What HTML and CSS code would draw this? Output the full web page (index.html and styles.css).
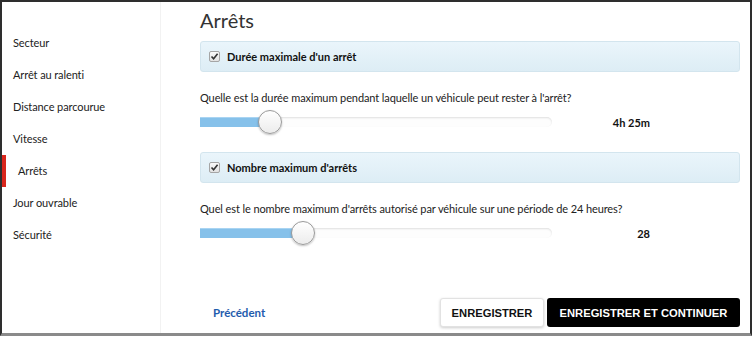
FILE: index.html
```html
<!DOCTYPE html>
<html>
<head>
    <meta charset="utf-8">
    <title>Arrêts</title>
    <link rel="stylesheet" href="styles.css">
</head>
<body>
    <div class="frame">
        <ul class="menu">
            <li>Secteur</li>
            <li>Arrêt au ralenti</li>
            <li>Distance parcourue</li>
            <li>Vitesse</li>
            <li class="active">Arrêts</li>
            <li>Jour ouvrable</li>
            <li>Sécurité</li>
        </ul>

        <div class="main">
            <h1>Arrêts</h1>

            <div class="panel">
                <span class="check"><svg width="9" height="9" viewBox="0 0 9 9"><path d="M1.5 4.5 L3.6 6.8 L7.6 1.8" fill="none" stroke="#333" stroke-width="1.6"/></svg></span>
                Durée maximale d'un arrêt
            </div>
            <p class="question">Quelle est la durée maximum pendant laquelle un véhicule peut rester à l'arrêt?</p>
            <div class="slider-row">
                <div class="track">
                    <div class="fill" style="width: 70px"></div>
                    <div class="handle" style="left: 58px"></div>
                </div>
                <span class="value">4h 25m</span>
            </div>

            <div class="panel">
                <span class="check"><svg width="9" height="9" viewBox="0 0 9 9"><path d="M1.5 4.5 L3.6 6.8 L7.6 1.8" fill="none" stroke="#333" stroke-width="1.6"/></svg></span>
                Nombre maximum d'arrêts
            </div>
            <p class="question">Quel est le nombre maximum d'arrêts autorisé par véhicule sur une période de 24 heures?</p>
            <div class="slider-row">
                <div class="track">
                    <div class="fill" style="width: 103px"></div>
                    <div class="handle" style="left: 91px"></div>
                </div>
                <span class="value">28</span>
            </div>

            <div class="footer">
                <a class="prev" href="#">Précédent</a>
                <div class="buttons">
                    <button class="btn-save">ENREGISTRER</button>
                    <button class="btn-next">ENREGISTRER ET CONTINUER</button>
                </div>
            </div>
        </div>
    </div>
</body>
</html>
```

FILE: styles.css
```css
* {
    margin: 0;
    padding: 0;
    box-sizing: border-box;
}

body {
    background: white;
    font-family: Lato, "Open Sans", sans-serif;
    font-size: 11px;
    letter-spacing: -0.1px;
    color: #222;
}

.frame {
    display: flex;
    width: 752px;
    height: 336px;
    border-top: 2px solid #2e2e2e;
    border-left: 2px solid #2e2e2e;
    border-right: 2px solid #2e2e2e;
    border-bottom: 3px solid #8a8a8a;
}

/* sidebar */
.menu {
    list-style: none;
    width: 159px;
    padding-top: 25px;
    border-right: 1px solid #f2f2f2;
}

.menu li {
    height: 32px;
    line-height: 32px;
    padding-left: 7px;
    border-left: 4px solid transparent;
}

.menu li.active {
    border-left-color: #d9261c;
    padding-left: 12px;
}

/* content */
.main {
    flex: 1;
    display: flex;
    flex-direction: column;
    padding: 6px 10px 6px 39px;
}

h1 {
    font-size: 20px;
    font-weight: normal;
    line-height: 24px;
    letter-spacing: 0;
    color: #333;
    margin-bottom: 9px;
}

.panel {
    display: flex;
    align-items: center;
    height: 31px;
    padding-left: 8px;
    border: 1px solid #d3e5ee;
    border-radius: 3px;
    background: linear-gradient(#eaf5fb, #ddedf5);
    font-weight: bold;
    font-size: 11px;
    letter-spacing: 0;
    color: #111;
    margin-bottom: 18px;
}

.check {
    display: flex;
    align-items: center;
    justify-content: center;
    width: 11px;
    height: 11px;
    margin-right: 7px;
    border: 1px solid #a5a5a5;
    border-radius: 2px;
    background: linear-gradient(#fafafa, #e2e2e2);
}

.question {
    line-height: 16px;
    margin-bottom: 4px;
}

.slider-row {
    display: flex;
    align-items: center;
    height: 24px;
    margin-bottom: 18px;
}

.track {
    position: relative;
    width: 352px;
    height: 10px;
    border-radius: 0 5px 5px 0;
    background: #fdfdfd;
    box-shadow: inset 0 1px 2px rgba(0, 0, 0, 0.12);
}

.fill {
    height: 100%;
    background: #86c1ea;
    border-top: 1px solid #a9d4f2;
}

.handle {
    position: absolute;
    top: -7px;
    width: 24px;
    height: 24px;
    border-radius: 50%;
    border: 1px solid #9a9a9a;
    background: linear-gradient(#ffffff, #ececec);
    box-shadow: 0 1px 2px rgba(0, 0, 0, 0.25);
}

.value {
    width: 98px;
    text-align: right;
    font-weight: bold;
    font-size: 11px;
    letter-spacing: 0;
    color: #111;
}

.footer {
    margin-top: auto;
    display: flex;
    align-items: center;
    justify-content: space-between;
    padding-left: 13px;
}

.prev {
    color: #1f5cad;
    font-weight: bold;
    font-size: 11.5px;
    letter-spacing: 0;
    text-decoration: none;
}

.buttons {
    display: flex;
    gap: 3px;
}

button {
    height: 29px;
    border-radius: 3px;
    font-family: "Liberation Sans", Arial, sans-serif;
    font-weight: bold;
    font-size: 11.2px;
}

.btn-save {
    width: 104px;
    background: white;
    color: #111;
    border: 1px solid #e2e2e2;
    box-shadow: 0 1px 3px rgba(0, 0, 0, 0.2);
}

.btn-next {
    width: 193px;
    background: black;
    color: white;
    border: none;
}
```
